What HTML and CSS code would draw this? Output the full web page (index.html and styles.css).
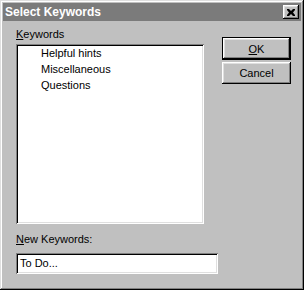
FILE: index.html
```html
<!DOCTYPE html>
<html lang="en">
<head>
    <meta charset="UTF-8">
    <title>Select Keywords</title>
    <link rel="stylesheet" href="styles.css">
</head>
<body>
    <div class="window">
        <!-- Title bar -->
        <div class="titlebar">
            <span class="title">Select Keywords</span>
            <span class="close">
                <svg width="8" height="7" viewBox="0 0 8 7">
                    <path d="M0 0h2l2 2 2-2h2v1l-2 2.5 2 2.5v1h-2l-2-2-2 2h-2v-1l2-2.5-2-2.5z" fill="#000"/>
                </svg>
            </span>
        </div>

        <div class="content">
            <!-- Left column: keyword list and new keyword field -->
            <div class="left">
                <div class="label"><u>K</u>eywords</div>
                <div class="listbox">
                    <div class="item">Helpful hints</div>
                    <div class="item">Miscellaneous</div>
                    <div class="item">Questions</div>
                </div>
                <div class="label new-label"><u>N</u>ew Keywords:</div>
                <div class="textfield">To Do...</div>
            </div>

            <!-- Right column: buttons -->
            <div class="right">
                <button class="btn default"><u>O</u>K</button>
                <button class="btn">Cancel</button>
            </div>
        </div>
    </div>
</body>
</html>
```

FILE: styles.css
```css
body {
    margin: 0;
    padding: 0;
    background-color: #c0c0c0;
    font-family: "Liberation Sans", Arial, sans-serif;
    font-size: 11px;
    color: #000;
}

.window {
    width: 304px;
    height: 290px;
    box-sizing: border-box;
    padding: 3px;
    background-color: #c0c0c0;
    box-shadow: inset -1px -1px #000, inset 1px 1px #dfdfdf,
                inset -2px -2px #808080, inset 2px 2px #fff;
}

.titlebar {
    height: 18px;
    background-color: #7b7b7b;
    display: flex;
    align-items: center;
    justify-content: space-between;
    padding: 0 2px 0 2px;
}

.title {
    color: #fff;
    font-weight: bold;
    font-size: 12px;
}

.close {
    width: 16px;
    height: 14px;
    box-sizing: border-box;
    background-color: #c0c0c0;
    display: flex;
    align-items: center;
    justify-content: center;
    box-shadow: inset -1px -1px #000, inset 1px 1px #fff,
                inset -2px -2px #808080, inset 2px 2px #dfdfdf;
}

.content {
    display: flex;
    padding: 6px 0 0 13px;
}

.left {
    width: 202px;
}

.label {
    height: 14px;
    line-height: 14px;
    margin-bottom: 3px;
}

.listbox {
    width: 188px;
    height: 180px;
    box-sizing: border-box;
    background-color: #fff;
    padding: 1px 0 0 25px;
    box-shadow: inset 1px 1px #808080, inset -1px -1px #fff,
                inset 2px 2px #000, inset -2px -2px #dfdfdf;
}

.item {
    height: 16px;
    line-height: 16px;
}

.new-label {
    margin-top: 8px;
    margin-bottom: 7px;
}

.textfield {
    width: 202px;
    height: 21px;
    box-sizing: border-box;
    background-color: #fff;
    padding: 0 4px;
    line-height: 21px;
    box-shadow: inset 1px 1px #808080, inset -1px -1px #fff,
                inset 2px 2px #000, inset -2px -2px #dfdfdf;
}

.right {
    display: flex;
    flex-direction: column;
    margin-left: 4px;
    padding-top: 10px;
}

.btn {
    width: 69px;
    height: 22px;
    padding: 0;
    border: none;
    background-color: #c0c0c0;
    font-family: "Liberation Sans", Arial, sans-serif;
    font-size: 11px;
    color: #000;
    box-shadow: inset -1px -1px #000, inset 1px 1px #fff,
                inset -2px -2px #808080, inset 2px 2px #dfdfdf;
}

.btn.default {
    height: 23px;
    border: 1px solid #000;
    margin-bottom: 2px;
}
```
